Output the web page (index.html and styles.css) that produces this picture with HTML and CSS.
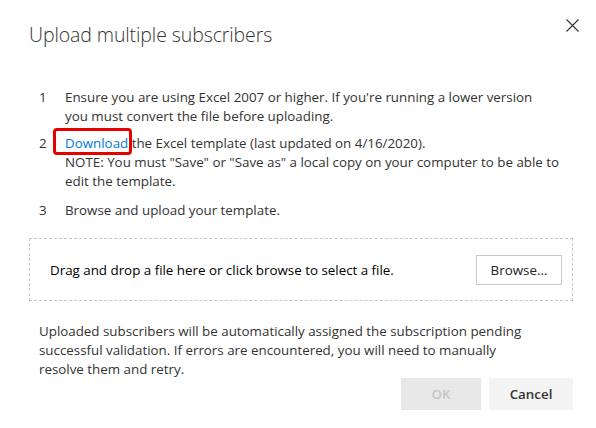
FILE: index.html
```html
<!DOCTYPE html>
<html lang="en">
<head>
<meta charset="utf-8">
<title>Upload multiple subscribers</title>
<link rel="stylesheet" href="styles.css">
</head>
<body>
<div class="dialog">
  <div class="header">
    <h1 class="title">Upload multiple subscribers</h1>
    <button class="close" aria-label="Close">
      <svg width="13" height="13" viewBox="0 0 13 13"><path d="M0.5 0.5 L12.5 12.5 M12.5 0.5 L0.5 12.5" stroke="#333" stroke-width="1.1" fill="none"/></svg>
    </button>
  </div>
  <ol class="steps">
    <li class="step first"><span class="num">1</span><span class="txt">Ensure you are using Excel 2007 or higher. If you're running a lower version<br>you must convert the file before uploading.</span></li>
    <li class="step"><span class="num">2</span><span class="txt"><a class="link" href="#"><span class="mark">Download</span></a> the Excel template (last updated on 4/16/2020).<br>NOTE: You must "Save" or "Save as" a local copy on your computer to be able to edit the template.</span></li>
    <li class="step"><span class="num">3</span><span class="txt">Browse and upload your template.</span></li>
  </ol>
  <div class="drop">
    <span class="drop-text">Drag and drop a file here or click browse to select a file.</span>
    <button class="browse">Browse...</button>
  </div>
  <p class="note">Uploaded subscribers will be automatically assigned the subscription pending successful validation. If errors are encountered, you will need to manually resolve them and retry.</p>
  <div class="footer">
    <button class="btn ok" disabled>OK</button>
    <button class="btn cancel">Cancel</button>
  </div>
</div>
</body>
</html>
```
FILE: styles.css
```css
html, body {
  margin: 0;
  padding: 0;
  background: #fff;
}
body {
  font-family: "Open Sans", "Noto Sans", sans-serif;
  font-size: 13.35px;
  color: #333;
}
.dialog {
  width: 596px;
  height: 428px;
  box-sizing: border-box;
  padding: 0 23px 0 29px;
}
.header {
  display: flex;
  justify-content: space-between;
  align-items: flex-start;
  padding-top: 19px;
}
.title {
  margin: 2px 0 0 0;
  font-size: 19.5px;
  font-weight: 300;
  line-height: 28px;
  color: #333;
  letter-spacing: -0.1px;
}
.close {
  border: 0;
  background: none;
  padding: 0;
  margin: 0 -6px 0 0;
  width: 13px;
  height: 13px;
  display: block;
}
.close svg { display: block; }
.steps {
  list-style: none;
  margin: 39px 0 0;
  padding: 0 0 0 10px;
}
.step {
  display: flex;
  line-height: 19px;
  margin-bottom: 10px;
}
.step.first { margin-bottom: 8px; }
.num {
  width: 26px;
  flex: none;
}
.txt { width: 500px; flex: none; }
.link {
  color: #0078d4;
  text-decoration: none;
}
.mark {
  position: relative;
}
.mark::after {
  content: "";
  position: absolute;
  left: -12px;
  right: -4px;
  top: -6px;
  bottom: -3px;
  border: 3px solid #e60000;
  border-radius: 4px;
}
.drop {
  margin-top: 18px;
  height: 63px;
  border: 1px dashed #c8c8c8;
  display: flex;
  align-items: center;
  justify-content: space-between;
  padding: 0 10px 0 20px;
  width: 544px;
  box-sizing: border-box;
  color: #000;
}
.browse {
  font-family: inherit;
  font-size: 13.35px;
  color: #222;
  background: #fff;
  border: 1px solid #c8c8c8;
  width: 86px;
  height: 30px;
  padding: 0;
  margin-top: 1px;
}
.note {
  margin: 21px 0 0 10px;
  line-height: 19px;
  width: 492px;
}
.footer {
  display: flex;
  justify-content: flex-end;
  gap: 8px;
  margin-top: -1px;
}
.btn {
  font-family: inherit;
  font-size: 13.35px;
  font-weight: 600;
  border: 0;
  height: 32px;
  padding: 0;
}
.ok {
  width: 80px;
  background: #e8e8e8;
  color: #c6c6c6;
}
.cancel {
  width: 84px;
  background: #f4f4f4;
  color: #333;
}
```
